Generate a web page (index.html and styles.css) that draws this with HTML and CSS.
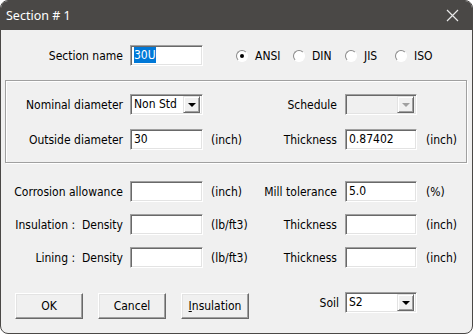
FILE: index.html
```html
<!DOCTYPE html>
<html>
    <head>
        <link rel="stylesheet" href="styles.css">
    </head>
    <body>

        <div class="window">
            <div class="titlebar">
                <span class="title">Section # 1</span>
                <svg class="close" width="13" height="13" viewBox="0 0 13 13">
                    <path d="M1 1 L12 12 M12 1 L1 12" stroke="#e8e8e8" stroke-width="1.2" fill="none"/>
                </svg>
            </div>

            <div class="body">
                <div class="grid top">
                    <span class="lbl">Section name</span>
                    <div class="field"><span class="selected">30U</span></div>
                    <div class="radios">
                        <span class="radio checked"><i></i>ANSI</span>
                        <span class="radio"><i></i>DIN</span>
                        <span class="radio"><i></i>JIS</span>
                        <span class="radio"><i></i>ISO</span>
                    </div>
                </div>

                <div class="group">
                    <div class="grid">
                        <span class="lbl">Nominal diameter</span>
                        <div class="field combo"><span class="value">Non Std</span><span class="drop"><b></b></span></div>
                        <span></span>
                        <span class="lbl right">Schedule</span>
                        <div class="field combo disabled"><span class="value"></span><span class="drop"><b></b></span></div>
                        <span></span>

                        <span class="lbl">Outside diameter</span>
                        <div class="field">30</div>
                        <span class="unit">(inch)</span>
                        <span class="lbl right">Thickness</span>
                        <div class="field">0.87402</div>
                        <span class="unit right">(inch)</span>
                    </div>
                </div>

                <div class="grid lower">
                    <span class="lbl">Corrosion allowance</span>
                    <div class="field"></div>
                    <span class="unit">(inch)</span>
                    <span class="lbl right">Mill tolerance</span>
                    <div class="field">5.0</div>
                    <span class="unit right">(%)</span>

                    <span class="lbl">Insulation :&nbsp; Density</span>
                    <div class="field"></div>
                    <span class="unit">(lb/ft3)</span>
                    <span class="lbl right">Thickness</span>
                    <div class="field"></div>
                    <span class="unit right">(inch)</span>

                    <span class="lbl">Lining :&nbsp; Density</span>
                    <div class="field"></div>
                    <span class="unit">(lb/ft3)</span>
                    <span class="lbl right">Thickness</span>
                    <div class="field"></div>
                    <span class="unit right">(inch)</span>
                </div>

                <div class="buttons">
                    <button class="btn">OK</button>
                    <button class="btn">Cancel</button>
                    <button class="btn"><u>I</u>nsulation</button>
                    <div class="soil">
                        <span>Soil</span>
                        <div class="field combo"><span class="value">S2</span><span class="drop"><b></b></span></div>
                    </div>
                </div>
            </div>
        </div>

    </body>
</html>
```

FILE: styles.css
```css
* { margin: 0; padding: 0; box-sizing: border-box; }
body { background: #ffffff; font-family: "DejaVu Sans Condensed", "DejaVu Sans", sans-serif; font-stretch: condensed; font-size: 12px; color: #000000; }

.window { width: 473px; height: 334px; border: 1px solid #4a4846; border-radius: 8px; overflow: hidden; background: #f0f0f0; display: flex; flex-direction: column; }

.titlebar { height: 29px; background: #4a4846; display: flex; align-items: center; justify-content: space-between; padding: 0 13px 0 5px; }
.titlebar .title { font-family: "Noto Sans", sans-serif; font-stretch: normal; font-size: 12.5px; color: #ffffff; }

.body { flex: 1; padding-top: 15px; }

.grid { display: grid; grid-template-columns: 129px 73px 52px 90px 72px 1fr; grid-auto-rows: 21px; row-gap: 12px; align-items: center; }
.grid.top { grid-template-columns: 129px 73px 1fr; }
.group { margin: 14px 5px 0 4px; border: 1px solid #a0a0a0; box-shadow: inset 1px 1px 0 #ffffff, 1px 1px 0 #ffffff; padding: 13px 0 12px 0; }
.group .grid { grid-template-columns: 124px 73px 52px 90px 72px 1fr; row-gap: 14px; }
.lower { margin-top: 18px; }

.lbl { text-align: right; padding-right: 7px; white-space: nowrap; }
.lbl.right { padding-right: 8px; }
.unit { padding-left: 8px; white-space: nowrap; }
.unit.right { padding-left: 9px; }

.field { height: 21px; background: #ffffff; border: 1px solid; border-color: #a0a0a0 #ffffff #ffffff #a0a0a0; box-shadow: inset 1px 1px 0 #696969, inset -1px -1px 0 #e3e3e3; padding: 0 2px 0 3px; line-height: 19px; white-space: nowrap; }
.field .selected { background: #0078d7; color: #ffffff; padding: 1px 0; }

.combo { display: flex; padding-right: 2px; }
.combo .value { flex: 1; }
.combo .drop { width: 17px; height: 17px; margin-top: 1px; background: #f0f0f0; border: 1px solid; border-color: #e3e3e3 #696969 #696969 #e3e3e3; box-shadow: inset 1px 1px 0 #ffffff, inset -1px -1px 0 #a0a0a0; display: flex; align-items: center; justify-content: center; }
.combo .drop b { border-left: 4px solid transparent; border-right: 4px solid transparent; border-top: 4px solid #000000; margin-top: 1px; }
.combo.disabled { background: #f0f0f0; }
.combo.disabled .drop b { border-top-color: #a0a0a0; }

.radios { display: grid; grid-template-columns: 57px 52px 50px auto; padding-left: 33px; }
.radio { display: flex; align-items: center; white-space: nowrap; }
.radio i { width: 12px; height: 12px; border-radius: 50%; border: 1px solid; border-color: #8a8a8a #ffffff #ffffff #8a8a8a; background: #ffffff; margin-right: 7px; display: flex; align-items: center; justify-content: center; }
.radio.checked i::after { content: ""; width: 4px; height: 4px; border-radius: 50%; background: #000000; }

.buttons { display: flex; gap: 15px; padding-left: 14px; margin-top: 25px; align-items: flex-start; }
.btn { width: 68px; height: 26px; font: inherit; background: #f0f0f0; border: 1px solid; border-color: #ffffff #696969 #696969 #ffffff; box-shadow: inset -1px -1px 0 #a0a0a0, inset 1px 1px 0 #e3e3e3; }
.soil { margin-left: auto; margin-right: 55px; margin-top: -1px; display: flex; align-items: center; gap: 6px; }
.soil .field { width: 72px; }
```
